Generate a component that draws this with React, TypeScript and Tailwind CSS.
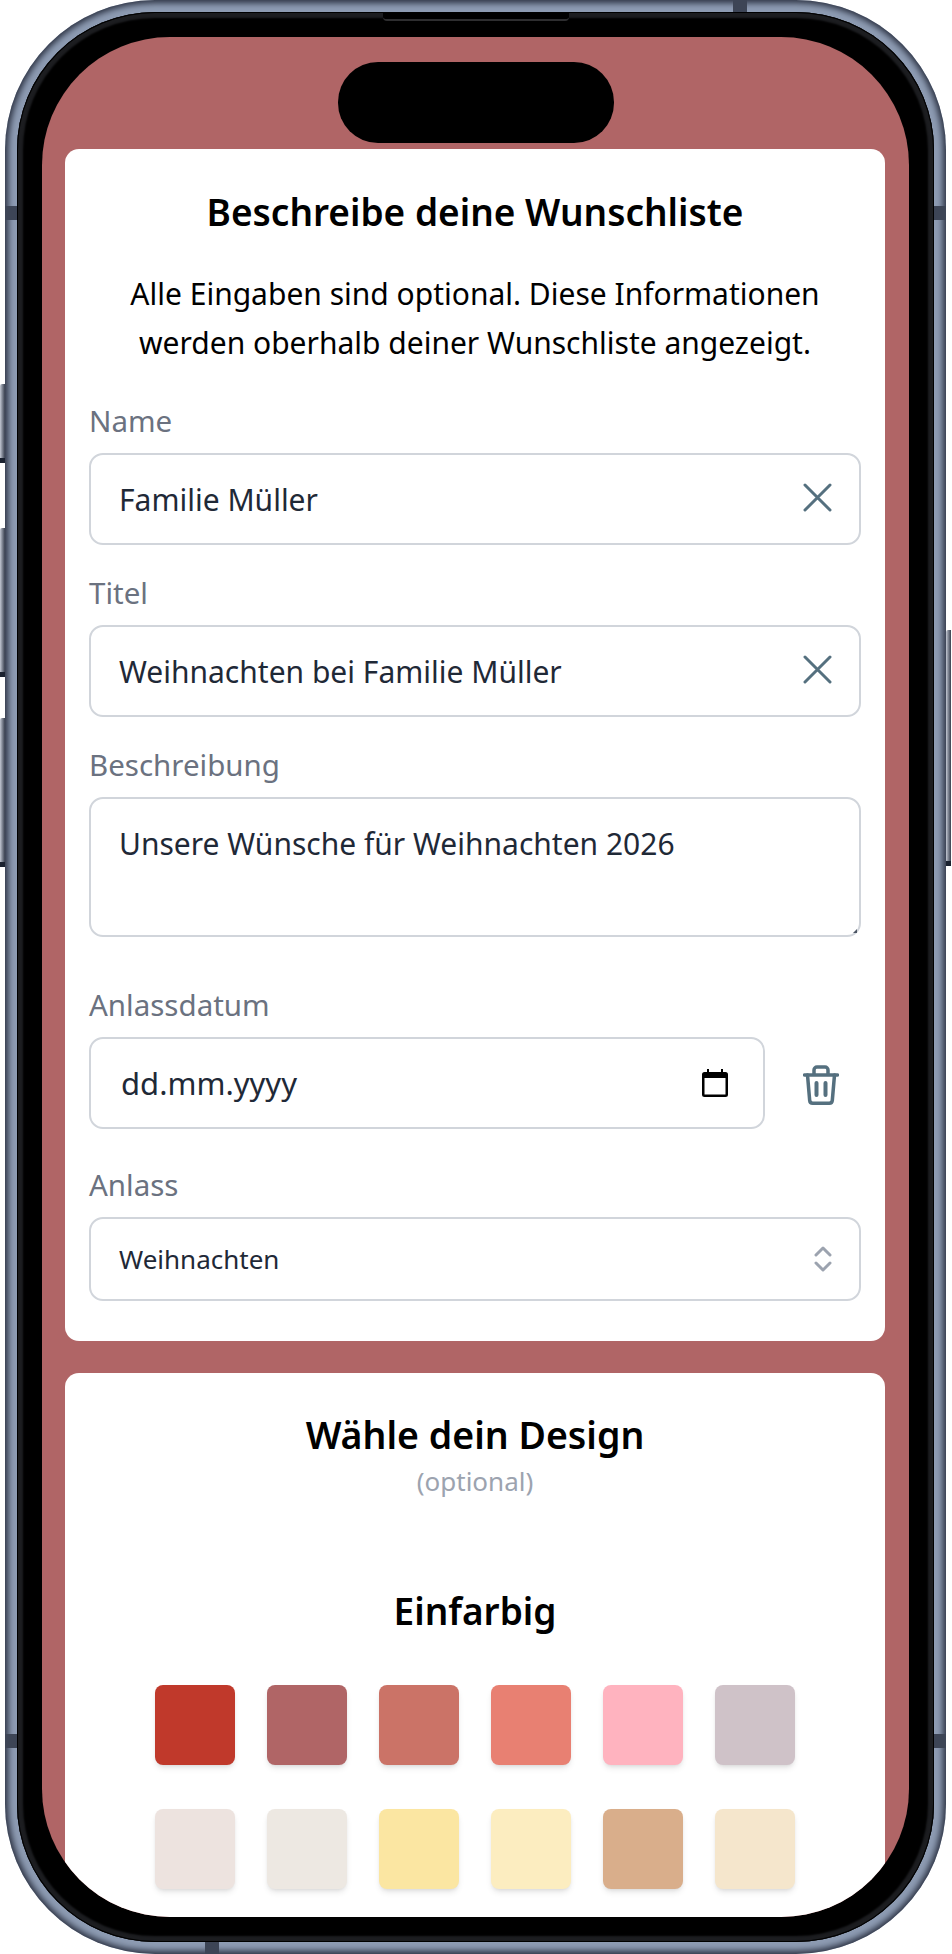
import React from "react";

const font = { fontFamily: '"Noto Sans", "Open Sans", sans-serif' };

function ClearIcon() {
  return (
    <svg className="mb-[4px]" width="30" height="30" viewBox="0 0 30 30" fill="none" stroke="#55707f" strokeWidth="3" strokeLinecap="round">
      <path d="M3 3 28 28M28 3 3 28" />
    </svg>
  );
}

function Calendar() {
  return (
    <svg width="26" height="30" viewBox="0 0 26 30" fill="none">
      <path d="M5 1h2v3h12V1h2v3h2.500A2.500 2.500 0 0 1 26 6.500v20a2.500 2.500 0 0 1-2.500 2.500h-21A2.500 2.500 0 0 1 0 26.500v-20A2.500 2.500 0 0 1 2.500 4H5zM2.500 10v16.500h21V10z" fill="#000" />
    </svg>
  );
}

function Trash() {
  return (
    <svg width="36" height="40" viewBox="0 0 36 40" fill="none" stroke="#55707f" strokeLinecap="round" strokeLinejoin="round">
      <path d="M1.500 10h33" strokeWidth="3.500" />
      <path d="M11 9V5a3 3 0 0 1 3-3h8a3 3 0 0 1 3 3v4" strokeWidth="3.500" />
      <path d="M4.500 10l2.200 25.500a3 3 0 0 0 3 2.700h16.600a3 3 0 0 0 3-2.700L31.500 10" strokeWidth="3.500" />
      <path d="M13.500 18v12M22.500 18v12" strokeWidth="4" />
    </svg>
  );
}

function Updown() {
  return (
    <svg width="18" height="28" viewBox="0 0 18 28" fill="none" stroke="#9ca3af" strokeWidth="3" strokeLinecap="round" strokeLinejoin="round">
      <path d="M2 10 9 3l7 7M2 18l7 7 7-7" />
    </svg>
  );
}

function Field({ label, className, children }: { label: string; className: string; children: React.ReactNode }) {
  return (
    <div className={`flex flex-col gap-[12px] ${className}`}>
      <div className="h-[40px] text-[29.500px] leading-[40px] text-[#6b7280]">{label}</div>
      {children}
    </div>
  );
}

function TextField({ value }: { value: string }) {
  return (
    <div className="flex h-[92px] items-center justify-between rounded-[14px] border-[2px] border-[#d1d5db] pl-[28px] pr-[27px] text-[30px] text-[#1f2937]">
      <span className="mt-[1px]">{value}</span>
      <ClearIcon />
    </div>
  );
}

const swatches = [
  "bg-[#c0392b]", "bg-[#b06566]", "bg-[#cb7367]", "bg-[#e88072]", "bg-[#ffb3bf]", "bg-[#cfc2c8]",
  "bg-[#ede3df]", "bg-[#ede8e2]", "bg-[#fbe6a2]", "bg-[#fcedc0]", "bg-[#d9ae8b]", "bg-[#f5e6cc]",
];

function Marks() {
  const c = "absolute bg-[#3d4556]";
  return (
    <>
      <div className={`${c} left-0 top-[206px] h-[14px] w-[12px]`} />
      <div className={`${c} right-0 top-[206px] h-[14px] w-[12px]`} />
      <div className={`${c} left-0 top-[1734px] h-[14px] w-[12px]`} />
      <div className={`${c} right-0 top-[1734px] h-[14px] w-[12px]`} />
      <div className={`${c} left-[728px] top-0 h-[12px] w-[14px]`} />
      <div className={`${c} left-[200px] bottom-0 h-[12px] w-[14px]`} />
    </>
  );
}

function SideButton({ className }: { className: string }) {
  return (
    <div className={`w-[5px] rounded-tl-[2px] border-b-[5px] border-[#1b2230] bg-gradient-to-r from-[#c4c9d4] to-[#39404f] ${className}`} />
  );
}

export default function App() {
  return (
    <div className="flex h-[1954px] w-[952px] overflow-hidden bg-white" style={font}>
      <div className="flex w-[5px] flex-col pt-[384px]">
        <SideButton className="h-[79px]" />
        <SideButton className="mt-[65px] h-[149px]" />
        <SideButton className="mt-[41px] h-[149px]" />
      </div>

      <div className="relative h-[1954px] w-[941px] rounded-[150px] bg-[#8e9cb3] p-[12px] shadow-[inset_0_0_6px_3px_#2a3040]">
        <div className="relative h-[1930px] w-[917px] rounded-[138px] bg-black p-[25px] shadow-[inset_0_0_0_1px_#000,inset_0_0_2px_6px_#1c1d20]">
          <div className="relative h-[1880px] w-[867px] overflow-hidden rounded-[128px] bg-[#b06566] pl-[23px] pr-[24px] pt-[112px]">
            <div className="absolute left-[296px] top-[25px] h-[81px] w-[276px] rounded-[40px] bg-black" />

            <section className="rounded-[14px] bg-white px-[24px] pb-[40px] pt-[39px]">
              <h1 className="text-center text-[37px] font-semibold leading-[48px] text-black">Beschreibe deine Wunschliste</h1>
              <p className="mt-[33px] text-center text-[30px] leading-[49px] text-black">
                Alle Eingaben sind optional. Diese Informationen
                <br />
                werden oberhalb deiner Wunschliste angezeigt.
              </p>

              <Field label="Name" className="mt-[34px]">
                <TextField value="Familie Müller" />
              </Field>

              <Field label="Titel" className="mt-[28px]">
                <TextField value="Weihnachten bei Familie Müller" />
              </Field>

              <Field label="Beschreibung" className="mt-[28px]">
                <div className="relative h-[140px] rounded-[14px] border-[2px] border-[#d1d5db] px-[28px] pt-[24px] text-[30px] leading-[42px] text-[#1f2937]">
                  Unsere Wünsche für Weihnachten 2026
                  <svg className="absolute bottom-[2px] right-[2px]" width="4" height="4" viewBox="0 0 4 4">
                    <path d="M4 0v4H0z" fill="#4b5563" />
                  </svg>
                </div>
              </Field>

              <Field label="Anlassdatum" className="mt-[48px]">
                <div className="flex items-center">
                  <div className="flex h-[92px] w-[676px] items-center justify-between rounded-[14px] border-[2px] border-[#d1d5db] pl-[30px] pr-[35px] text-[31px] text-[#1f2937]">
                    <span className="mt-[1px]">dd.mm.yyyy</span>
                    <Calendar />
                  </div>
                  <div className="ml-[38px] mt-[3px]">
                    <Trash />
                  </div>
                </div>
              </Field>

              <Field label="Anlass" className="mt-[36px]">
                <div className="flex h-[84px] items-center justify-between rounded-[14px] border-[2px] border-[#d1d5db] pl-[28px] pr-[27px] text-[26px] text-[#1f2937]">
                  <span>Weihnachten</span>
                  <Updown />
                </div>
              </Field>
            </section>

            <section className="mt-[32px] rounded-[14px] bg-white pb-[40px] pt-[38px]">
              <h2 className="text-center text-[37.500px] font-semibold leading-[48px] text-black">Wähle dein Design</h2>
              <div className="mt-[2px] text-center text-[26px] leading-[40px] text-[#9ca3af]">(optional)</div>
              <h3 className="mt-[86px] text-center text-[37px] font-semibold leading-[48px] text-black">Einfarbig</h3>
              <div className="mx-auto mt-[50px] grid w-[640px] grid-cols-6 gap-x-[32px] gap-y-[44px]">
                {swatches.map((s) => (
                  <div key={s} className={`h-[80px] w-[80px] rounded-[8px] shadow-md ${s}`} />
                ))}
              </div>
            </section>
          </div>
        </div>
        <Marks />
        <div className="absolute left-[378px] top-[12px] h-[9px] w-[186px] rounded-b-[4px] border-b-[2px] border-[#2e2e30] bg-black" />
      </div>

      <div className="flex w-[6px] flex-col pt-[630px]">
        <SideButton className="h-[236px]" />
      </div>
    </div>
  );
}
